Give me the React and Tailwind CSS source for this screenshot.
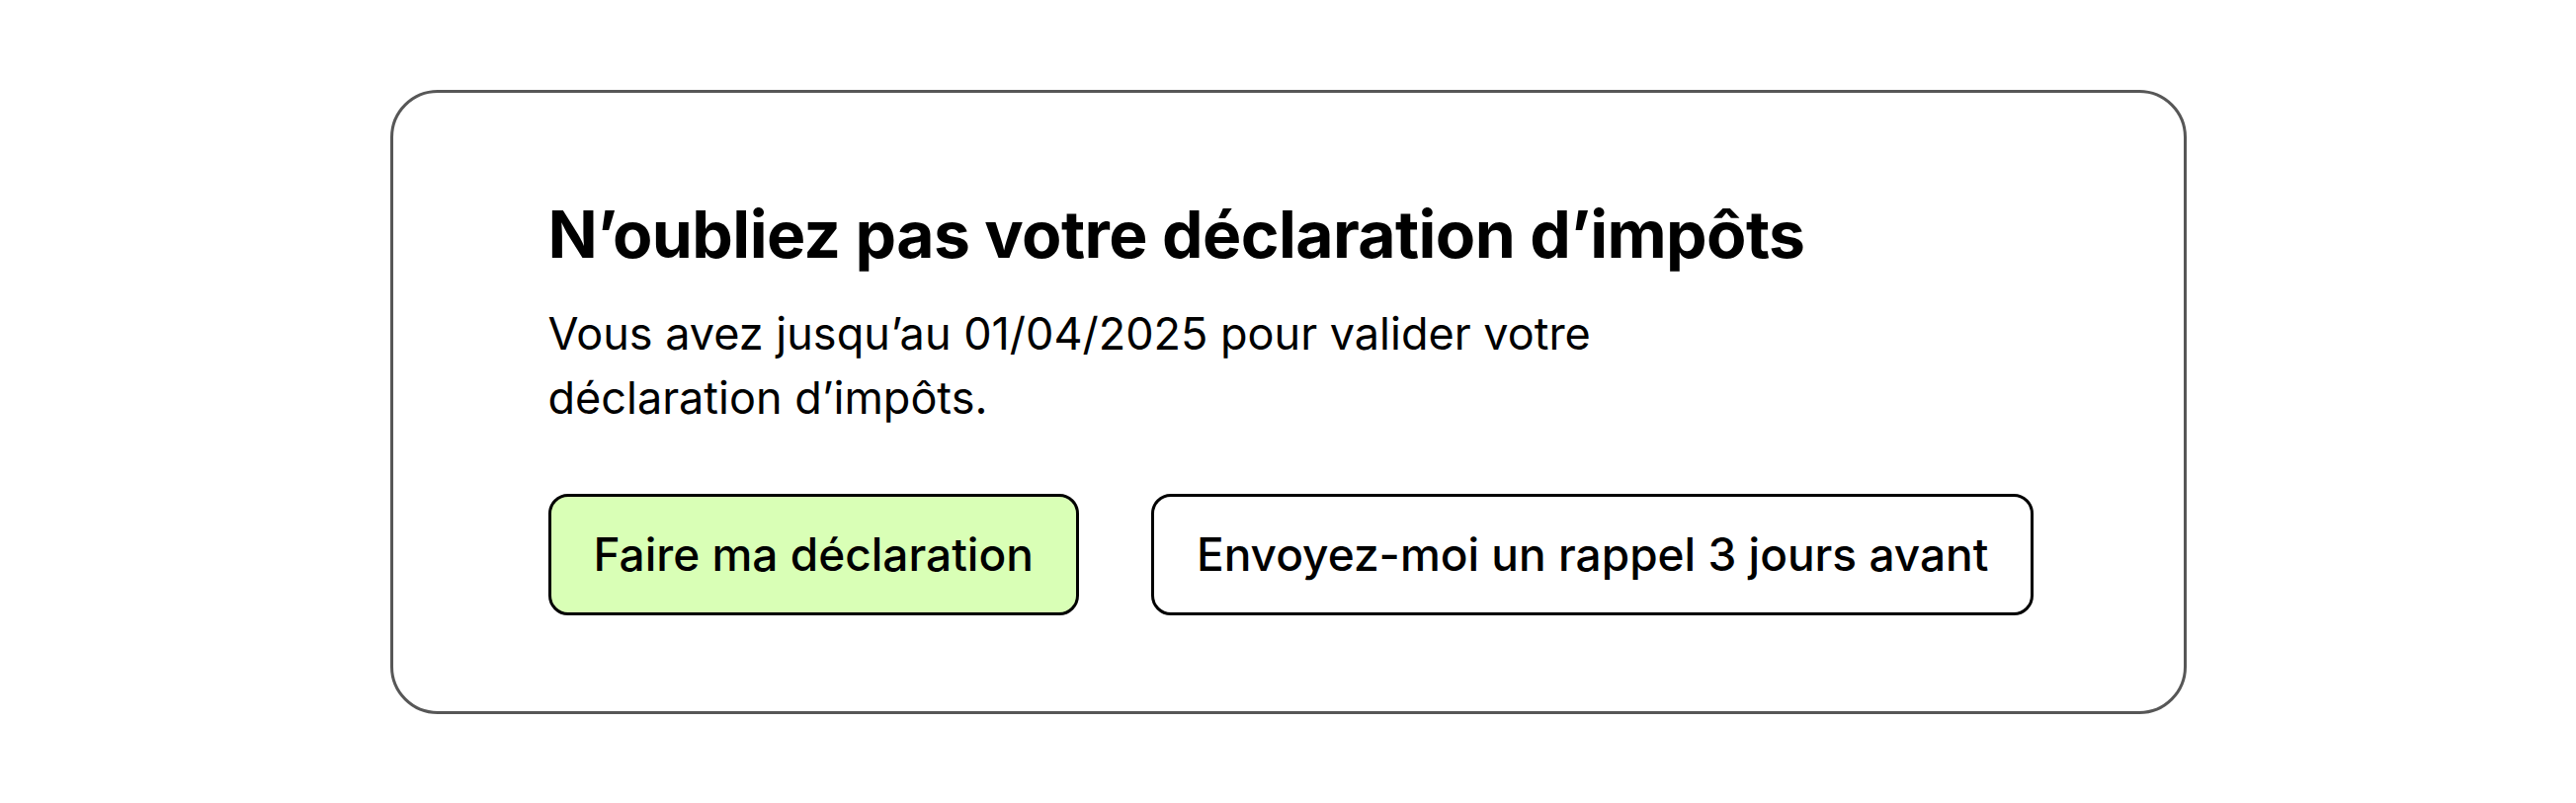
export default function App() {
  return (
    <div className="flex h-[813px] w-full items-center justify-center bg-white font-['Inter',sans-serif] text-black">
      <div className="flex h-[632px] w-[1818px] flex-col rounded-[48px] border-[3px] border-[#575757] pl-[157px] pt-[103px]">
        <h1 className="text-[66px] font-bold leading-[80px] tracking-[-0.6px]">
          N’oubliez pas votre déclaration d’impôts
        </h1>
        <p className="mt-[28px] max-w-[1180px] text-[45px] leading-[65px]">
          Vous avez jusqu’au 01/04/2025 pour valider votre déclaration d’impôts.
        </p>
        <div className="mt-[65px] flex gap-[73px]">
          <button className="h-[123px] rounded-[20px] border-[3px] border-black bg-[#d9ffb6] px-[43px] text-[46px] font-medium">
            Faire ma déclaration
          </button>
          <button className="h-[123px] rounded-[20px] border-[3px] border-black bg-white px-[43px] text-[46px] font-medium">
            Envoyez-moi un rappel 3 jours avant
          </button>
        </div>
      </div>
    </div>
  )
}
